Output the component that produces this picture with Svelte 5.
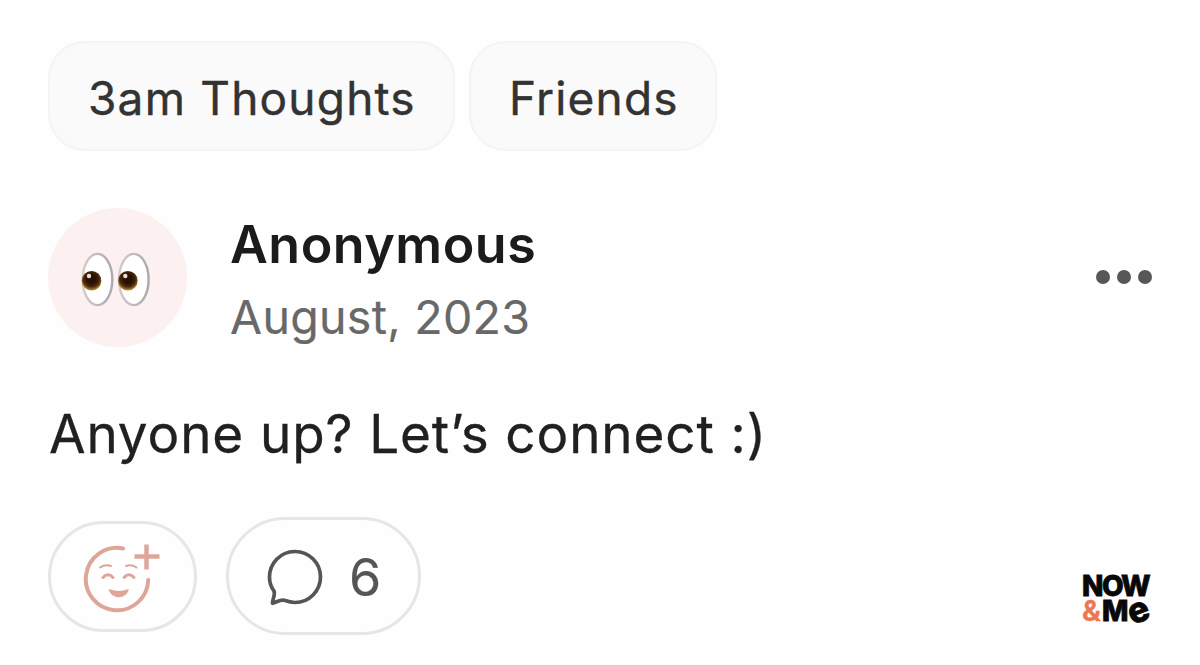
<script>
  let tags = $state(['3am Thoughts', 'Friends']);
  let commentCount = $state(6);
</script>

<main class="post">
  <div class="tags">
    {#each tags as tag, i (tag)}
      <a href="#top" class="tag" class:short={i === 1}>{tag}</a>
    {/each}
  </div>

  <header class="author">
    <div class="avatar">
      <svg width="70" height="56" viewBox="0 0 70 56" aria-hidden="true">
        <defs>
          <radialGradient id="iris" cx=".5" cy=".4" r=".6">
            <stop offset="0.35" stop-color="#271006" />
            <stop offset="0.68" stop-color="#4b280b" />
            <stop offset="1" stop-color="#c29a39" />
          </radialGradient>
          <linearGradient id="rim" x1="0" x2="1">
            <stop offset="0" stop-color="#d4cccd" />
            <stop offset="1" stop-color="#aaa9ae" />
          </linearGradient>
        </defs>
        {#each [0, 36.3] as x}
          <g transform="translate({x} 0)">
            <ellipse cx="16.5" cy="27.5" rx="14.8" ry="25.6" fill="#fff" stroke="url(#rim)" stroke-width="2.4" />
            <circle cx="10.6" cy="28.8" r="9.8" fill="url(#iris)" />
            <circle cx="8" cy="24" r="2.2" fill="#e6dfdb" />
          </g>
        {/each}
      </svg>
    </div>
    <div class="meta">
      <div class="name">Anonymous</div>
      <div class="date">August, 2023</div>
    </div>
    <button class="more" aria-label="More options">
      <i></i><i></i><i></i>
    </button>
  </header>

  <p class="text">Anyone up? Let’s connect :)</p>

  <footer>
    <button class="pill react" aria-label="Add reaction">
      <svg width="78" height="72" viewBox="0 0 78 72" fill="none" stroke="#dda698" stroke-linecap="round">
        <path d="M40 5.5A31.2 31.2 0 1 0 65.2 37" stroke-width="4" />
        <path d="M63.5 1.5v25M51.5 13.500h25" stroke-width="4.5" stroke-linecap="butt" />
        <path d="M17 24.5q5-3.5 11-1.5M43 23q5.5-2 10.5 1.5" stroke-width="2" />
        <path d="M20 34.5q5-5.5 10 0M41 34.5q5-5.5 10 0" stroke-width="3" />
        <path d="M26.5 47q9.5 3.5 18.5 0q-2.5 6.5-9.2 6.5t-9.3-6.5z" fill="#dda698" stroke-width="1.5" stroke-linejoin="round" />
      </svg>
    </button>
    <button class="pill comments" aria-label="Comments">
      <svg width="58" height="58" viewBox="0 0 58 58" fill="none" stroke="#555" stroke-width="3.7" stroke-linejoin="round">
        <path d="M8 42C5 38 3.5 33.500 3.500 28.500a25.500 25.500 0 1 1 25.500 25c-4.500 0-8-1.200-11-2.200c-3.500-.8-7 1.700-11.500 3c.2-4.800 3-8.800 1.500-12.300z" />
      </svg>
      <span>{commentCount}</span>
    </button>
    <div class="logo">
      <div class="now">NOW</div>
      <div class="me"><span class="amp">&amp;</span><span>M</span><span class="e">e</span></div>
    </div>
  </footer>
</main>

<style>
  :global(body) { margin: 0; background: #fefefe; }

  .post {
    width: 1200px;
    height: 665px;
    box-sizing: border-box;
    padding: 41px 48px 0 48px;
    font-family: Inter, "Liberation Sans", sans-serif;
    color: #202020;
    overflow: hidden;
  }

  button { background: none; border: 0; padding: 0; font: inherit; color: inherit; }

  .tags { display: flex; gap: 14px; }
  .tag {
    box-sizing: border-box;
    width: 407px;
    height: 110px;
    padding-left: 38px;
    border: 2px solid #f4f4f4;
    border-radius: 37px;
    background: #fafafa;
    color: #333;
    font-size: 46px;
    line-height: 110px;
    letter-spacing: 1.2px;
    text-decoration: none;
    white-space: nowrap;
    -webkit-text-stroke: 0.4px;
  }
  .tag.short { width: 248px; }

  .author { display: flex; align-items: center; height: 140px; margin-top: 56px; }
  .avatar {
    display: flex;
    align-items: center;
    justify-content: center;
    width: 139px;
    height: 139px;
    border-radius: 50%;
    background: #fcf0f0;
  }
  .avatar svg { margin: 5px 4px 0 0; }
  .meta { margin: 7px 0 0 43px; flex: 1; white-space: nowrap; }
  .name { font-size: 52px; line-height: 72px; font-weight: 600; letter-spacing: 0.5px; color: #1b1b1b; }
  .date { font-size: 46.5px; line-height: 72px; letter-spacing: 0.3px; color: #686868; -webkit-text-stroke: 0.2px; }
  .more { display: flex; gap: 7px; }
  .more i { width: 14px; height: 14px; border-radius: 50%; background: #575757; }

  .text { margin: 52px 0 0 1px; font-size: 53px; line-height: 70px; letter-spacing: 0.88px; white-space: nowrap; -webkit-text-stroke: 0.3px; }

  footer { display: flex; align-items: center; margin-top: 48px; }
  .pill { display: flex; align-items: center; box-sizing: border-box; border: 3px solid #e6e6e6; border-radius: 60px; }
  .react { width: 149px; height: 111px; padding: 6px 0 0 32px; }
  .comments { width: 195px; height: 118px; margin-left: 29px; padding-left: 37px; color: #555; font-size: 52px; }
  .comments svg { margin-top: 3px; }
  .comments span { margin: 3px 0 0 25px; -webkit-text-stroke: 0.2px; }

  .logo { margin: 46px 1px 0 auto; width: 68px; color: #080808; font-size: 28px; line-height: 25px; font-weight: 800; white-space: nowrap; -webkit-text-stroke: 0.8px; }
  .now { margin-left: -1px; letter-spacing: -1.5px; }
  .me { display: flex; height: 25px; }
  .amp { width: 20px; margin-left: -1px; color: #ee7650; font-weight: 700; -webkit-text-stroke: 0.3px; }
  .e { font-size: 35px; line-height: 20px; transform: rotate(-20deg); }
</style>
